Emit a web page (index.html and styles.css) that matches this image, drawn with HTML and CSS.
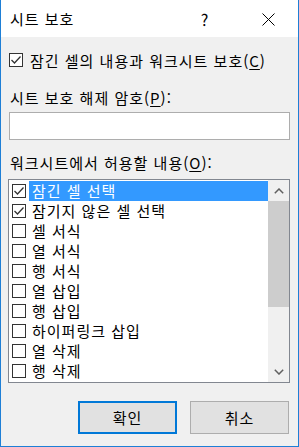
FILE: index.html
```html
<!DOCTYPE html>
<html lang="ko">
<head>
    <meta charset="UTF-8">
    <meta name="viewport" content="width=device-width, initial-scale=1.0">
    <title>시트 보호</title>
    <link rel="stylesheet" href="styles.css">
</head>
<body>
    <div class="titlebar">
        <span class="title">시트 보호</span>
        <span class="help">?</span>
        <span class="close">
            <svg width="13" height="13" viewBox="0 0 13 13"><path d="M0.5 0.5 L12.5 12.5 M12.5 0.5 L0.5 12.5" stroke="#000" stroke-width="1" fill="none"/></svg>
        </span>
    </div>

    <div class="content">
        <label class="check-row">
            <span class="box checked"><svg width="12" height="12" viewBox="0 0 12 12"><polyline points="1.5,6 4.5,9 10.5,2.5" stroke="#333" stroke-width="1.3" fill="none"/></svg></span>
            <span>잠긴 셀의 내용과 워크시트 보호(<u>C</u>)</span>
        </label>

        <div class="field-label first">시트 보호 해제 암호(<u>P</u>):</div>
        <input type="password" class="password">

        <div class="field-label">워크시트에서 허용할 내용(<u>O</u>):</div>
        <div class="listbox">
            <ul class="items">
                <li class="selected"><span class="box checked"><svg width="12" height="12" viewBox="0 0 12 12"><polyline points="1.5,6 4.5,9 10.5,2.5" stroke="#333" stroke-width="1.3" fill="none"/></svg></span><span class="text">잠긴 셀 선택</span></li>
                <li><span class="box checked"><svg width="12" height="12" viewBox="0 0 12 12"><polyline points="1.5,6 4.5,9 10.5,2.5" stroke="#333" stroke-width="1.3" fill="none"/></svg></span><span class="text">잠기지 않은 셀 선택</span></li>
                <li><span class="box"></span><span class="text">셀 서식</span></li>
                <li><span class="box"></span><span class="text">열 서식</span></li>
                <li><span class="box"></span><span class="text">행 서식</span></li>
                <li><span class="box"></span><span class="text">열 삽입</span></li>
                <li><span class="box"></span><span class="text">행 삽입</span></li>
                <li><span class="box"></span><span class="text">하이퍼링크 삽입</span></li>
                <li><span class="box"></span><span class="text">열 삭제</span></li>
                <li><span class="box"></span><span class="text">행 삭제</span></li>
            </ul>
            <div class="scrollbar">
                <div class="arrow">
                    <svg width="10" height="6" viewBox="0 0 10 6"><polyline points="0.8,5.2 5,1 9.2,5.2" stroke="#606060" stroke-width="1.5" fill="none"/></svg>
                </div>
                <div class="track"><div class="thumb"></div></div>
                <div class="arrow">
                    <svg width="10" height="6" viewBox="0 0 10 6"><polyline points="0.8,0.8 5,5 9.2,0.8" stroke="#606060" stroke-width="1.5" fill="none"/></svg>
                </div>
            </div>
        </div>

        <div class="buttons">
            <button class="btn default">확인</button>
            <button class="btn">취소</button>
        </div>
    </div>
</body>
</html>
```

FILE: styles.css
```css
* { box-sizing: border-box; }
html, body { margin: 0; padding: 0; }
body {
    width: 299px;
    height: 447px;
    background: #f0f0f0;
    border: 1px solid #1e7fd6;
    border-top: none;
    font-family: "Noto Sans CJK KR", "Noto Sans", sans-serif;
    font-size: 15px;
    letter-spacing: 1px;
    color: #000;
    overflow: hidden;
}
.titlebar {
    height: 37px;
    background: #fff;
    display: flex;
    align-items: center;
    padding-left: 9px;
}
.title { flex: 1; line-height: 20px; }
.help { width: 20px; text-align: center; margin-right: 47px; font-size: 16px; line-height: 20px; }
.close { width: 13px; height: 13px; display: flex; margin-right: 23px; margin-top: 1px; }

.content { padding: 0 8px 0 7px; }
u { text-decoration: underline; text-underline-offset: 2px; }

.check-row {
    display: flex;
    align-items: center;
    height: 20px;
    margin-top: 13px;
    padding-left: 1px;
    gap: 7px;
}
.box {
    width: 14px;
    height: 14px;
    border: 1px solid #333;
    background: #fff;
    display: flex;
    align-items: center;
    justify-content: center;
    flex-shrink: 0;
}
.field-label { line-height: 20px; margin-top: 13px; padding-left: 2px; }
.field-label.first { margin-top: 18px; }
.password {
    display: block;
    width: 281px;
    height: 28px;
    margin: 4px 0 0 1px;
    border: 1px solid #adadad;
    background: #fff;
    outline: none;
}

.listbox {
    margin-top: 6px;
    width: 282px;
    height: 204px;
    border: 1px solid #828790;
    background: #fff;
    display: flex;
}
.items { list-style: none; margin: 0; padding: 1px 0 0 0; flex: 1; }
.items li {
    display: flex;
    align-items: center;
    height: 20px;
    padding-left: 3px;
}
.items .box { margin-right: 3px; }
.items .text { flex: 1; height: 20px; line-height: 20px; padding-left: 3px; }
.items li.selected .text { background: #3399ff; color: #fff; }

.scrollbar {
    width: 21px;
    background: #f0f0f0;
    display: flex;
    flex-direction: column;
}
.arrow { height: 21px; display: flex; align-items: center; justify-content: center; }
.track { flex: 1; }
.thumb { height: 106px; background: #cdcdcd; }

.buttons {
    display: flex;
    justify-content: flex-end;
    gap: 13px;
    margin-top: 18px;
    padding-right: 1px;
}
.btn {
    width: 99px;
    height: 33px;
    font-family: inherit;
    font-size: 15px;
    letter-spacing: 1px;
    background: #e1e1e1;
    border: 1px solid #adadad;
    color: #000;
    padding: 0;
}
.btn.default { border: 2px solid #0078d7; }
```
